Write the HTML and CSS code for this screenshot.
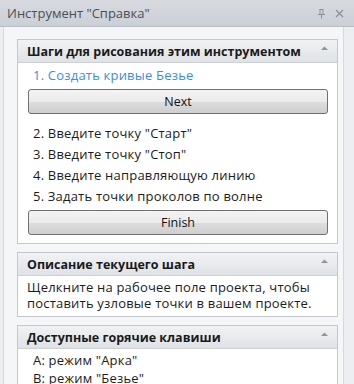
FILE: index.html
```
<!DOCTYPE html>
<html lang="ru">
<head>
    <meta charset="UTF-8">
    <title>Инструмент "Справка"</title>
    <link rel="stylesheet" href="styles.css">
</head>
<body>
  <div class="pane">
    <div class="titlebar">
      <span class="title">Инструмент "Справка"</span>
      <span class="tools">
        <svg width="9" height="11" viewBox="0 0 9 11"><path d="M2.5 1.5h4M3 1.5v4.5M6 1.5v4.5M1 6.5h7M4.5 6.5v4" stroke="#8a9099" fill="none"/></svg>
        <svg width="9" height="9" viewBox="0 0 9 9"><path d="M1 1l7 7M8 1l-7 7" stroke="#8a9099" stroke-width="1.3" fill="none"/></svg>
      </span>
    </div>

    <div class="content">
      <!-- шаги -->
      <section class="panel">
        <div class="panel-head">
          <span>Шаги для рисования этим инструментом</span>
          <svg class="chev" width="7" height="4" viewBox="0 0 7 4"><path d="M0 4l3.5-3.5L7 4z" fill="#8f959c"/></svg>
        </div>
        <div class="panel-body steps">
          <p class="step current">1. Создать кривые Безье</p>
          <button class="btn">Next</button>
          <p class="step">2. Введите точку "Старт"</p>
          <p class="step">3. Введите точку "Стоп"</p>
          <p class="step">4. Введите направляющую линию</p>
          <p class="step">5. Задать точки проколов по волне</p>
          <button class="btn">Finish</button>
        </div>
      </section>

      <!-- описание -->
      <section class="panel">
        <div class="panel-head">
          <span>Описание текущего шага</span>
          <svg class="chev" width="7" height="4" viewBox="0 0 7 4"><path d="M0 4l3.5-3.5L7 4z" fill="#8f959c"/></svg>
        </div>
        <div class="panel-body desc">
          Щелкните на рабочее поле проекта, чтобы поставить узловые точки в вашем проекте.
        </div>
      </section>

      <!-- клавиши -->
      <section class="panel">
        <div class="panel-head">
          <span>Доступные горячие клавиши</span>
          <svg class="chev" width="7" height="4" viewBox="0 0 7 4"><path d="M0 4l3.5-3.5L7 4z" fill="#8f959c"/></svg>
        </div>
        <div class="panel-body keys">
          <p class="key">A: режим "Арка"</p>
          <p class="key">B: режим "Безье"</p>
        </div>
      </section>
    </div>
  </div>
</body>
</html>
```
FILE: styles.css
```
/* общий вид */
body {
    margin: 0;
    height: 384px;
    overflow: hidden;
    background: #eceef1;
    font-family: "Open Sans", sans-serif;
    font-size: 13px;
    color: #1c1c1c;
}

p {
    margin: 0;
}

/* заголовок окна */
.titlebar {
    height: 26px;
    display: flex;
    align-items: center;
    justify-content: space-between;
    padding: 0 10px 0 7px;
    background: linear-gradient(to bottom, #d7dadf, #cbd0d6);
    border-bottom: 1px solid #b9bec5;
    color: #4a4f56;
    font-size: 13px;
}

.tools {
    display: flex;
    align-items: center;
    gap: 9px;
}

/* область панелей */
.content {
    margin: 0 10px 0 3px;
    padding: 12px 5px 0 13px;
    border-left: 1px solid #d6d9dd;
    border-right: 1px solid #d6d9dd;
    background: #f5f6f7;
    height: 400px;
    display: flex;
    flex-direction: column;
    gap: 8px;
}

.panel {
    border: 1px solid #c4c8cd;
    background: #fff;
}

.panel-head {
    height: 22px;
    display: flex;
    align-items: center;
    justify-content: space-between;
    padding: 0 9px 0 9px;
    background: linear-gradient(to bottom, #f1f2f4, #dfe2e6);
    border-bottom: 1px solid #cdd0d4;
    font-weight: bold;
    font-size: 12.5px;
    color: #1a1a1a;
}

.chev {
    margin-bottom: 6px;
}

.panel-body {
    padding: 2px 9px 8px 10px;
}

/* шаги */
.step {
    line-height: 21px;
    padding-left: 5px;
    letter-spacing: 0.2px;
}

.step.current {
    color: #3c8de0;
}

.btn {
    display: block;
    width: 100%;
    height: 25px;
    margin: 3px 0 9px;
    border: 1px solid #707070;
    border-radius: 3px;
    background: linear-gradient(to bottom, #f3f3f3, #ebebeb 50%, #dddddd 51%, #cfcfcf);
    font-family: "Open Sans", sans-serif;
    font-size: 12.5px;
    color: #111;
}

.btn:last-child {
    margin-bottom: 0;
}

/* описание */
.desc {
    padding: 3px 8px 5px 9px;
    line-height: 16px;
    letter-spacing: 0.2px;
}

/* клавиши */
.key {
    line-height: 17px;
    padding-left: 5px;
    padding-top: 1px;
    letter-spacing: 0.2px;
}
```
